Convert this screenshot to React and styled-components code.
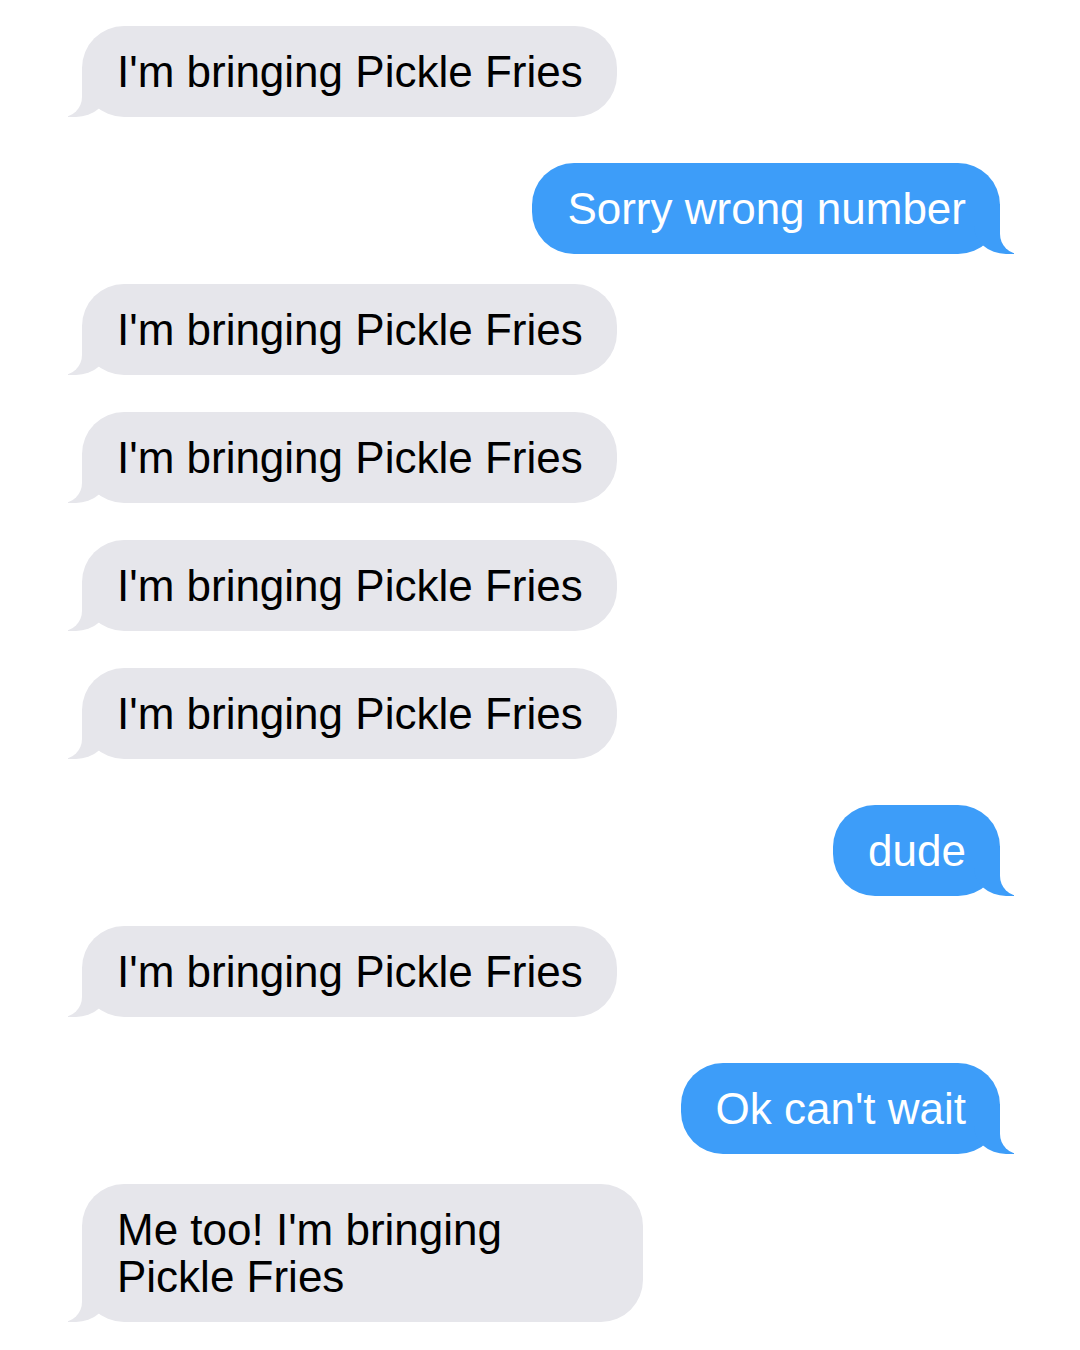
import React from "react";
import styled, { createGlobalStyle, css } from "styled-components";

const messages = [
  { from: "them", text: "I'm bringing Pickle Fries" },
  { from: "me", text: "Sorry wrong number" },
  { from: "them", text: "I'm bringing Pickle Fries" },
  { from: "them", text: "I'm bringing Pickle Fries" },
  { from: "them", text: "I'm bringing Pickle Fries" },
  { from: "them", text: "I'm bringing Pickle Fries" },
  { from: "me", text: "dude" },
  { from: "them", text: "I'm bringing Pickle Fries" },
  { from: "me", text: "Ok can't wait" },
  { from: "them", text: "Me too! I'm bringing Pickle Fries" },
];

const App = () => {
  return (
    <>
      <GlobalStyle />
      <Thread>
        {messages.map((msg, i) => {
          const prev = messages[i - 1];
          let gap = 0;
          if (prev) {
            if (prev.from === "them" && msg.from === "me") gap = 46;
            else if (prev.from === "me" && msg.from === "them") gap = 30;
            else gap = 37;
          }
          return (
            <Bubble key={i} fromMe={msg.from === "me"} gap={gap}>
              {msg.text}
            </Bubble>
          );
        })}
      </Thread>
    </>
  );
};

export default App;

const GlobalStyle = createGlobalStyle`
  body {
    margin: 0;
    background: #ffffff;
    font-family: "Liberation Sans", Arial, sans-serif;
  }
`;

const Thread = styled.div`
  display: flex;
  flex-direction: column;
  width: 1080px;
  box-sizing: border-box;
  padding: 26px 80px 40px 82px;
`;

const Bubble = styled.div`
  position: relative;
  max-width: 561px;
  box-sizing: border-box;
  padding: 22px 34px 22px 35px;
  margin-top: ${(props) => props.gap}px;
  border-radius: 42px;
  font-size: 44px;
  line-height: 47px;
  word-wrap: break-word;

  &::before,
  &::after {
    content: "";
    position: absolute;
    bottom: 0;
    height: 50px;
  }

  ${(props) =>
    props.fromMe
      ? css`
          align-self: flex-end;
          background: #3d9df9;
          color: #ffffff;
          &::before {
            right: -14px;
            width: 40px;
            background: #3d9df9;
            border-bottom-left-radius: 32px 28px;
          }
          &::after {
            right: -52px;
            width: 52px;
            background: #ffffff;
            border-bottom-left-radius: 20px;
          }
        `
      : css`
          align-self: flex-start;
          background: #e6e6eb;
          color: #000000;
          &::before {
            left: -14px;
            width: 40px;
            background: #e6e6eb;
            border-bottom-right-radius: 32px 28px;
          }
          &::after {
            left: -52px;
            width: 52px;
            background: #ffffff;
            border-bottom-right-radius: 20px;
          }
        `}
`;
